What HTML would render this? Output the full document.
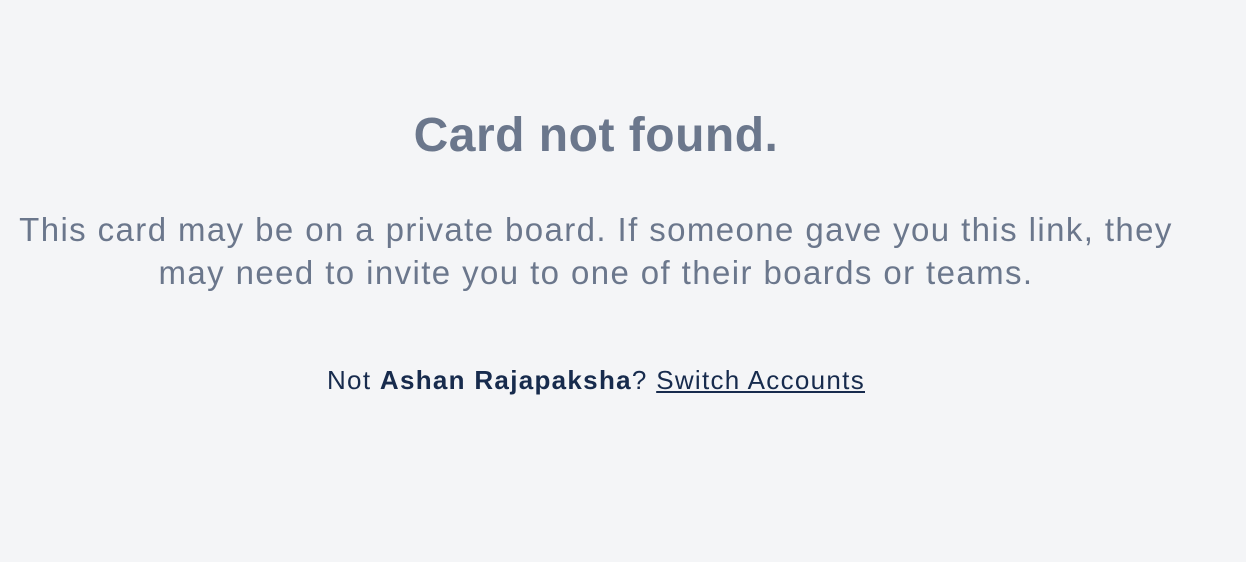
<!DOCTYPE html>
<html><head><meta charset="utf-8"><style>
body{margin:0;width:1246px;height:562px;background:#f4f5f7;font-family:"Liberation Sans",sans-serif;position:relative;overflow:hidden}
.c{position:absolute;left:0;width:1192px;text-align:center}
h1{position:absolute;left:0;width:1192px;text-align:center;margin:0;top:106px;font-size:48px;line-height:60px;color:#6b778c;font-weight:bold;letter-spacing:0.5px}
p.m{top:208px;font-size:33px;line-height:43px;color:#6b778c;margin:0;letter-spacing:1.4px}
p.f{top:363px;font-size:26px;line-height:34px;color:#172b4d;margin:0;letter-spacing:1.3px}
a{color:#172b4d;text-decoration:underline}
</style></head><body>
<h1>Card not found.</h1>
<p class="c m">This card may be on a private board. If someone gave you this link, they<br>may need to invite you to one of their boards or teams.</p>
<p class="c f">Not <b>Ashan Rajapaksha</b>? <a>Switch Accounts</a></p>
</body></html>
